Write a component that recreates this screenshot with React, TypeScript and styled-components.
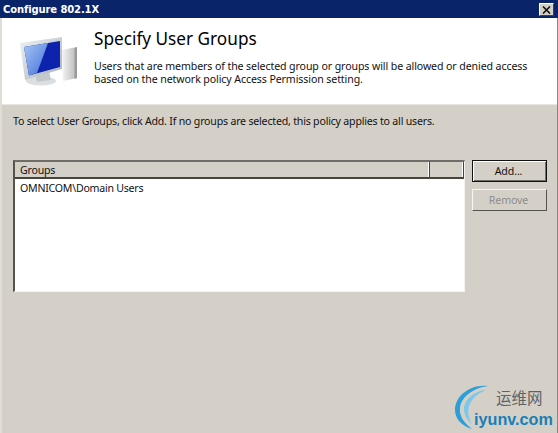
import React from "react";
import styled, { createGlobalStyle } from "styled-components";

const Global = createGlobalStyle`
  html, body { margin: 0; padding: 0; background: #d4d0c8; overflow: hidden; }
  * { box-sizing: border-box; }
`;

const Win = styled.div`
  width: 558px;
  height: 433px;
  display: flex;
  flex-direction: column;
  position: relative;
  background: #d4d0c8;
  border-left: 2px solid #e0ddd6;
  border-right: 1px solid #8a8882;
  font-family: "Noto Sans", "Liberation Sans", sans-serif;
  font-size: 11px;
  color: #111;
`;

const TitleBar = styled.div`
  height: 18px;
  flex: none;
  margin-left: -2px;
  margin-right: -1px;
  background: #0a246a;
  color: #fff;
  display: flex;
  align-items: center;
  justify-content: space-between;
  padding: 1px 4px 0 3px;
  font-family: "DejaVu Sans", sans-serif;
  font-weight: 700;
  font-size: 10px;
  letter-spacing: -0.12px;
`;

const CloseButton = styled.div`
  width: 15px;
  height: 13px;
  background: #d4d0c8;
  border: 1px solid;
  border-color: #fff #404040 #404040 #fff;
  display: flex;
  align-items: center;
  justify-content: center;
`;

const Header = styled.div`
  height: 87px;
  flex: none;
  background: #fff;
  border-bottom: 1px solid #e8e6e0;
  display: flex;
  padding: 10px 20px 0 13px;
`;

const IconBox = styled.div`
  width: 79px;
  flex: none;
  padding-top: 9px;
`;

const HeaderText = styled.div`
  display: flex;
  flex-direction: column;
`;

const Heading = styled.div`
  font-size: 17.2px;
  line-height: 22px;
  color: #000;
`;

const Description = styled.div`
  margin-top: 10px;
  font-size: 10.6px;
  line-height: 13px;
  letter-spacing: -0.1px;
  white-space: nowrap;
`;

const Body = styled.div`
  flex: 1;
  display: flex;
  flex-direction: column;
  padding: 10px 9px 0 11px;
`;

const Hint = styled.div`
  font-size: 10.6px;
  line-height: 13px;
  letter-spacing: -0.2px;
`;

const Row = styled.div`
  display: flex;
  margin-top: 32px;
  gap: 7px;
`;

const ListView = styled.div`
  width: 452px;
  height: 132px;
  flex: none;
  background: #fff;
  border: 1px solid;
  border-color: #6f6d68 #f4f3ef #f4f3ef #55534f;
  border-top-width: 2px;
  border-left-width: 2px;
`;

const ListHead = styled.div`
  height: 17px;
  display: flex;
  background: #d4d0c8;
  border-bottom: 2px solid #45443f;
`;

const HeadCell = styled.div<{ $w?: number }>`
  ${(p) => (p.$w ? `width: ${p.$w}px;` : "flex: 1;")}
  padding-left: 5px;
  font-size: 10.6px;
  line-height: 17px;
  letter-spacing: -0.2px;
  border-right: 1px solid #45443f;
  box-shadow: inset -1px 0 0 #fff;
`;

const ListItem = styled.div`
  padding: 3px 0 0 5px;
  font-size: 10.6px;
  line-height: 13px;
  letter-spacing: -0.24px;
`;

const Buttons = styled.div`
  display: flex;
  flex-direction: column;
  gap: 7px;
`;

const Button = styled.div<{ $def?: boolean; $off?: boolean }>`
  width: 75px;
  height: 22px;
  flex: none;
  display: flex;
  align-items: center;
  justify-content: center;
  padding-right: 2px;
  font-size: 10.6px;
  letter-spacing: -0.1px;
  background: #d4d0c8;
  color: ${(p) => (p.$off ? "#8f8d88" : "#111")};
  ${(p) =>
    p.$def
      ? `border: 1px solid #111; box-shadow: inset 1px 1px 0 #fff, inset -1px -1px 0 #6f6d68;`
      : `border: 1px solid; border-color: #f6f5f1 #55534f #55534f #f6f5f1;`}
`;

const Watermark = styled.div`
  position: absolute;
  right: 3px;
  bottom: 2px;
  width: 102px;
  height: 50px;
`;

const Brand = styled.div`
  position: absolute;
  left: 22px;
  bottom: 4px;
  font-family: "Liberation Sans", sans-serif;
  font-weight: 700;
  font-size: 16.2px;
  line-height: 16px;
  color: #1a7fb5;
`;

const BrandCn = styled.div`
  position: absolute;
  left: 44px;
  top: 7px;
  font-family: "Noto Sans CJK SC", sans-serif;
  font-size: 15.5px;
  line-height: 18px;
  color: #5d6468;
`;

const Arc = styled.svg`
  position: absolute;
  left: 0;
  top: 0;
`;

const Monitor = () => (
  <svg width="64" height="52" viewBox="0 0 64 52">
    <defs>
      <linearGradient id="bez" x1="0" y1="0" x2="1" y2="1">
        <stop offset="0" stopColor="#eef2f6" />
        <stop offset="1" stopColor="#a8b0b6" />
      </linearGradient>
      <linearGradient id="tower" x1="0" y1="0" x2="1" y2="0">
        <stop offset="0" stopColor="#f4f4f4" />
        <stop offset="1" stopColor="#b8b8b8" />
      </linearGradient>
      <linearGradient id="glare" x1="0" y1="0" x2="1" y2="1">
        <stop offset="0" stopColor="#a8c6f4" />
        <stop offset="1" stopColor="#3f6fd8" />
      </linearGradient>
      <filter id="soft"><feGaussianBlur stdDeviation="0.6" /></filter>
    </defs>
    <g filter="url(#soft)">
      <path d="M47 13 L62 10 L62 41 L48 44 Z" fill="url(#tower)" />
      <path d="M59.5 11 L62 10 L62 41 L59.5 42 Z" fill="#9a9a9a" />
      <ellipse cx="26" cy="44" rx="15" ry="4.5" fill="#dcdfe1" />
      <path d="M20 37 L34 34 L36 43 L22 45 Z" fill="#c4c8cc" />
      <path d="M5 6 L47 0 L47 32 L10 43 Z" fill="url(#bez)" />
      <path d="M9 10 L45 4 L45 30 L14 38.5 Z" fill="#0b22ad" />
      <path d="M9 10 L33 6 L22 36 L14 38.5 Z" fill="url(#glare)" />
    </g>
  </svg>
);

export default function App() {
  return (
    <>
      <Global />
      <Win>
        <TitleBar>
          <span>Configure 802.1X</span>
          <CloseButton>
            <svg width="9" height="8" viewBox="0 0 9 8">
              <path d="M1 0.5 L8 7.5 M8 0.5 L1 7.5" stroke="#111" strokeWidth="1.6" />
            </svg>
          </CloseButton>
        </TitleBar>
        <Header>
          <IconBox>
            <Monitor />
          </IconBox>
          <HeaderText>
            <Heading>Specify User Groups</Heading>
            <Description>
              Users that are members of the selected group or groups will be allowed or denied access
              <br />
              based on the network policy Access Permission setting.
            </Description>
          </HeaderText>
        </Header>
        <Body>
          <Hint>To select User Groups, click Add. If no groups are selected, this policy applies to all users.</Hint>
          <Row>
            <ListView>
              <ListHead>
                <HeadCell $w={415}>Groups</HeadCell>
                <HeadCell />
              </ListHead>
              <ListItem>OMNICOM\Domain Users</ListItem>
            </ListView>
            <Buttons>
              <Button $def>Add...</Button>
              <Button $off>Remove</Button>
            </Buttons>
          </Row>
        </Body>
        <Watermark>
          <Arc width="42" height="50" viewBox="0 0 42 50">
            <path d="M36 5 C18 3 3 15 3 29 C3 38 10 45 20 48 C12 42 7 35 8 27 C9 16 21 7 36 5 Z" fill="#2a9fd8" />
            <path d="M34 9 C22 10 12 19 12 28 C12 34 15 39 20 43 C16 36 15 29 18 23 C21 16 27 12 34 9 Z" fill="#7cc8ea" />
          </Arc>
          <BrandCn>运维网</BrandCn>
          <Brand>iyunv.com</Brand>
        </Watermark>
      </Win>
    </>
  );
}
